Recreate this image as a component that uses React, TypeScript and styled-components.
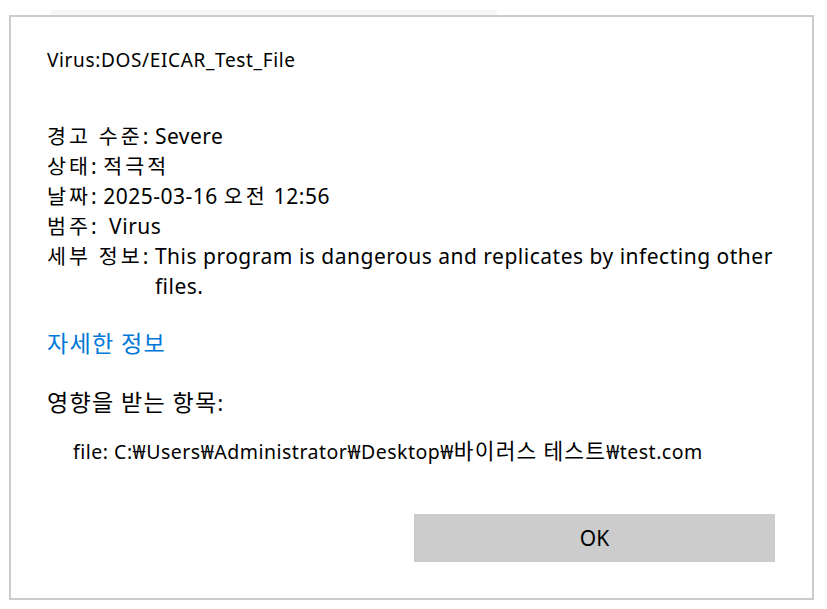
import React from "react";
import styled, { createGlobalStyle } from "styled-components";

const Global = createGlobalStyle`
  html, body { margin: 0; padding: 0; background: #ffffff; }
  body { font-family: "Noto Sans", "Noto Sans CJK KR", sans-serif; color: #000; }
`;

const Page = styled.div`
  width: 827px;
  height: 609px;
  overflow: hidden;
  display: flex;
  flex-direction: column;
`;

const BackStrip = styled.div`
  margin: 10px 0 0 51px;
  width: 446px;
  height: 5px;
  background: #f7f7f7;
`;

const Dialog = styled.div`
  margin-left: 9px;
  width: 805px;
  height: 585px;
  box-sizing: border-box;
  border: 2px solid #cccccc;
  padding: 30px 37px 0 36px;
  display: flex;
  flex-direction: column;
`;

const Ko = styled.span<{ $compact?: boolean }>`
  display: inline-block;
  font-family: "Noto Sans CJK KR", sans-serif;
  font-size: ${(p) => (p.$compact ? "0.98em" : "1.1em")};
  line-height: ${(p) => (p.$compact ? "24px" : "26px")};
  letter-spacing: ${(p) => (p.$compact ? "0.15em" : "0.055em")};
  white-space: pre;
`;

const Title = styled.div`
  font-size: 19px;
  line-height: 26px;
  letter-spacing: 0.65px;
`;

const Info = styled.div`
  margin-top: 48px;
  display: flex;
  flex-direction: column;
  font-size: 21px;
  line-height: 30px;
  letter-spacing: 0.5px;
`;

const Row = styled.div`
  display: flex;
`;

const Label = styled.span`
  white-space: pre;
  flex: none;
`;

const Value = styled.span`
  flex: 1;
`;

const Link = styled.a`
  margin-top: 28px;
  font-size: 21px;
  line-height: 30px;
  color: #0078d7;
  text-decoration: none;
  align-self: flex-start;
`;

const Heading = styled.div`
  margin-top: 29px;
  font-size: 21px;
  line-height: 30px;
`;

const FileLine = styled.div`
  margin-top: 19px;
  padding-left: 26px;
  font-size: 19.5px;
  line-height: 28px;
  letter-spacing: 0.5px;
`;

const Footer = styled.div`
  margin-top: auto;
  margin-bottom: 36px;
  display: flex;
  justify-content: flex-end;
`;

const OkButton = styled.button`
  width: 361px;
  height: 48px;
  border: none;
  background: #cccccc;
  font-family: inherit;
  font-size: 21px;
  color: #000;
  padding: 0;
`;

export default function App() {
  return (
    <Page>
      <Global />
      <BackStrip />
      <Dialog>
        <Title>Virus:DOS/EICAR_Test_File</Title>
        <Info>
          <Row>
            <Label><Ko $compact>경고 수준</Ko>: </Label>
            <Value>Severe</Value>
          </Row>
          <Row>
            <Label><Ko $compact>상태</Ko>: </Label>
            <Value><Ko $compact>적극적</Ko></Value>
          </Row>
          <Row>
            <Label><Ko $compact>날짜</Ko>: </Label>
            <Value>2025-03-16 <Ko $compact>오전</Ko> 12:56</Value>
          </Row>
          <Row>
            <Label><Ko $compact>범주</Ko>:  </Label>
            <Value>Virus</Value>
          </Row>
          <Row>
            <Label><Ko $compact>세부 정보</Ko>: </Label>
            <Value>This program is dangerous and replicates by infecting other files.</Value>
          </Row>
        </Info>
        <Link href="#"><Ko>자세한 정보</Ko></Link>
        <Heading><Ko>영향을 받는 항목</Ko>:</Heading>
        <FileLine>
          file: C:₩Users₩Administrator₩Desktop₩<Ko>바이러스 테스트</Ko>₩test.com
        </FileLine>
        <Footer>
          <OkButton>OK</OkButton>
        </Footer>
      </Dialog>
    </Page>
  );
}
